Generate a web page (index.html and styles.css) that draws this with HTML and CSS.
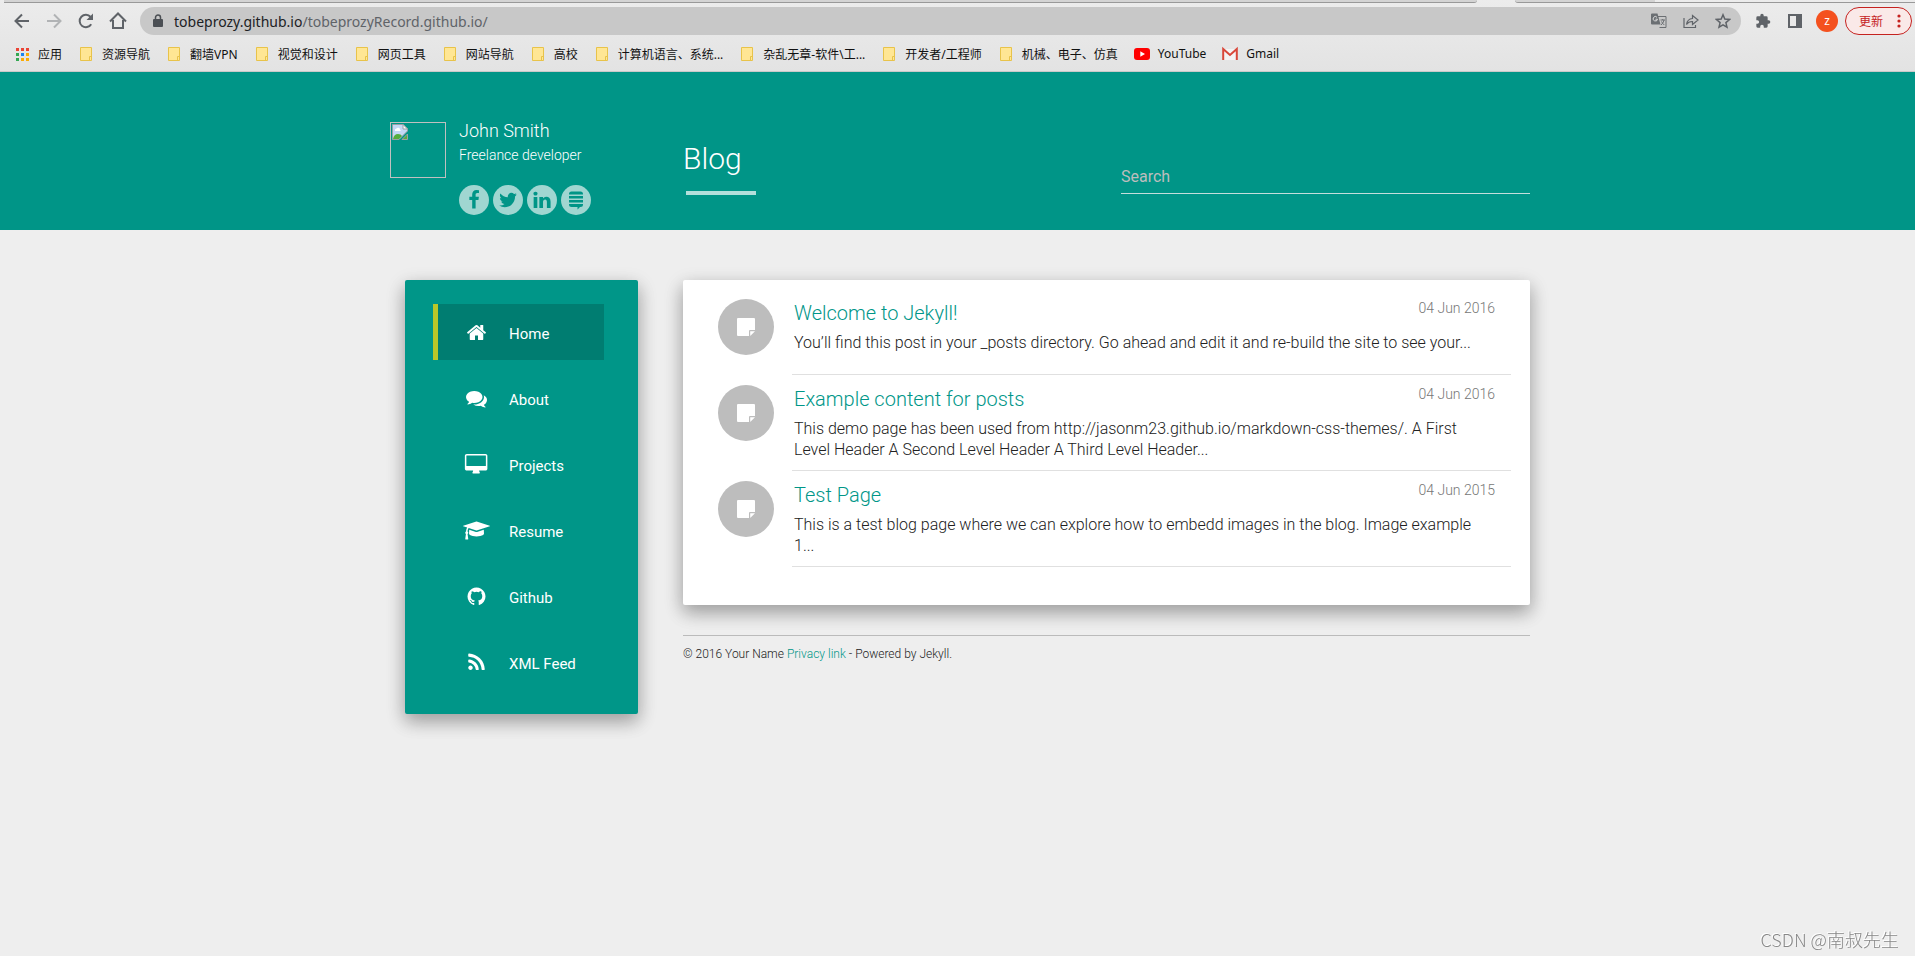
FILE: index.html
```html
<!DOCTYPE html>
<html lang="en">
<head>
    <meta charset="UTF-8">
    <meta name="viewport" content="width=device-width, initial-scale=1.0">
    <title>Blog</title>

    <link rel="stylesheet" href="styles.css">

</head>
<body>

    <svg class="sprite" aria-hidden="true">
        <symbol id="folder" viewBox="0 0 16 16">
            <path d="M2.500 1.500h11v13h-11z" fill="#ffe694" stroke="#e8c34a"/>
            <path d="M11.500 14v-3.500h2" fill="none" stroke="#e8c34a"/>
        </symbol>
        <symbol id="note" viewBox="0 0 18 18">
            <path d="M1 0h16a1 1 0 0 1 1 1v11h-5a1 1 0 0 0-1 1v5H1a1 1 0 0 1-1-1V1a1 1 0 0 1 1-1zM13.200 13.200H18L13.200 18z" fill="#fff"/>
        </symbol>
    </svg>

    <div class="browser">
        <div class="tab-strip">
            <span class="tab tab-left"></span>
            <span class="tab tab-right"></span>
            <span class="tab-rest"></span>
        </div>

        <div class="toolbar">
            <button class="tool" aria-label="Back">
                <svg width="16" height="16" viewBox="0 0 16 16"><path d="M15 8H2M8 1.500L1.500 8 8 14.500" fill="none" stroke="#5f6368" stroke-width="2"/></svg>
            </button>
            <button class="tool" aria-label="Forward">
                <svg width="16" height="16" viewBox="0 0 16 16"><path d="M1 8h13M8 1.500L14.500 8 8 14.500" fill="none" stroke="#b1b3b5" stroke-width="2"/></svg>
            </button>
            <button class="tool" aria-label="Reload">
                <svg width="16" height="16" viewBox="0 0 16 16"><path d="M13.200 11.200A6.200 6.200 0 1 1 12.600 4" fill="none" stroke="#5f6368" stroke-width="2"/><path d="M15 0.500v6.500H8.500z" fill="#5f6368"/></svg>
            </button>
            <button class="tool" aria-label="Home page">
                <svg width="18" height="18" viewBox="0 0 18 18"><path d="M1 9.500L9 1.500l8 8M4 8v8h3.500M14 8v8h-3.500M4 16h10" fill="none" stroke="#5f6368" stroke-width="2"/></svg>
            </button>

            <div class="address">
                <svg width="10" height="14" viewBox="0 0 10 14"><path d="M1 5h8a1 1 0 0 1 1 1v6a1 1 0 0 1-1 1H1a1 1 0 0 1-1-1V6a1 1 0 0 1 1-1z" fill="#4b4f54"/><path d="M2.500 6V3.500a2.500 2.500 0 0 1 5 0V6" fill="none" stroke="#4b4f54" stroke-width="1.500"/></svg>
                <span class="url">tobeprozy.github.io<span class="path">/tobeprozyRecord.github.io/</span></span>
                <button aria-label="Translate">
                    <svg width="16" height="16" viewBox="0 0 16 16"><path d="M7 3.500h8v11H8.500" fill="none" stroke="#6b6f73"/><path d="M1 0.500h5.500l3 11H1a1 1 0 0 1-1-1v-9a1 1 0 0 1 1-1z" fill="#6b6f73"/><path d="M6 4.300A2.200 2.200 0 1 0 6.500 6.200H4.500" fill="none" stroke="#ddd"/><path d="M9.500 7h4.500M11.700 6v1M13 7q-.5 3-3 5M10.500 8.500q1 2 2.800 3.500" fill="none" stroke="#6b6f73"/></svg>
                </button>
                <button aria-label="Share">
                    <svg width="16" height="16" viewBox="0 0 16 16"><path d="M1 5v9.500h11.500V12M3.500 11.500q.8-5.500 6-6V2.500L15 7l-5.500 4.500V8.500q-3.800-.2-6 3z" fill="none" stroke="#5f6368" stroke-width="1.200"/></svg>
                </button>
                <button aria-label="Bookmark this page">
                    <svg width="16" height="16" viewBox="0 0 16 16"><path d="M8 1.800l1.800 4.300 4.700.4-3.600 3.100 1.100 4.600L8 11.800l-4 2.400 1.100-4.600L1.500 6.500l4.700-.4z" fill="none" stroke="#5f6368" stroke-width="1.500"/></svg>
                </button>
            </div>

            <button class="tool" aria-label="Extensions">
                <svg width="16" height="16" viewBox="0 0 24 24"><path d="M20.500 11H19V7a2 2 0 0 0-2-2h-4V3.500a2.500 2.500 0 0 0-5 0V5H4a2 2 0 0 0-2 2v3.800h1.500a2.700 2.700 0 0 1 0 5.400H2V20a2 2 0 0 0 2 2h3.800v-1.500a2.700 2.700 0 0 1 5.400 0V22H17a2 2 0 0 0 2-2v-4h1.500a2.500 2.500 0 0 0 0-5z" fill="#5f6368"/></svg>
            </button>
            <button class="tool" aria-label="Side panel">
                <svg width="14" height="14" viewBox="0 0 14 14"><path d="M0 0h14v14H0zM2 2v10h6V2z" fill="#5f6368" fill-rule="evenodd"/></svg>
            </button>
            <button class="account">z</button>
            <button class="update">更新
                <svg width="4" height="14" viewBox="0 0 4 14"><circle cx="2" cy="2" r="1.600"/><circle cx="2" cy="7" r="1.600"/><circle cx="2" cy="12" r="1.600"/></svg>
            </button>
        </div>

        <nav class="bookmarks" aria-label="Bookmarks">
            <a href="#"><svg viewBox="0 0 16 16"><path d="M2 2h3v3H2zM7 2h3v3H7zM12 2h3v3h-3z" fill="#ea4335"/><path d="M2 7h3v3H2zM2 12h3v3H2z" fill="#34a853"/><path d="M7 7h3v3H7z" fill="#1a84f0"/><path d="M12 7h3v3h-3zM7 12h3v3H7zM12 12h3v3h-3z" fill="#fbab05"/></svg>应用</a>
            <a href="#"><svg><use href="#folder"/></svg>资源导航</a>
            <a href="#"><svg><use href="#folder"/></svg>翻墙VPN</a>
            <a href="#"><svg><use href="#folder"/></svg>视觉和设计</a>
            <a href="#"><svg><use href="#folder"/></svg>网页工具</a>
            <a href="#"><svg><use href="#folder"/></svg>网站导航</a>
            <a href="#"><svg><use href="#folder"/></svg>高校</a>
            <a href="#"><svg><use href="#folder"/></svg>计算机语言、系统...</a>
            <a href="#"><svg><use href="#folder"/></svg>杂乱无章-软件\工...</a>
            <a href="#"><svg><use href="#folder"/></svg>开发者/工程师</a>
            <a href="#"><svg><use href="#folder"/></svg>机械、电子、仿真</a>
            <a href="#"><svg viewBox="0 0 16 16"><rect y="2" width="16" height="12" rx="3" fill="#f00"/><path d="M6.300 5.300L11 8l-4.700 2.700z" fill="#fff"/></svg>YouTube</a>
            <a href="#"><svg viewBox="0 0 16 16"><path d="M2 3h12v11H2z" fill="#f4f4f4"/><path d="M1.200 14V3L8 9l6.800-6v11" fill="none" stroke="#d9483b" stroke-width="2"/></svg>Gmail</a>
        </nav>
    </div>

    <header class="header">
        <div class="container header-grid">
            <div class="profile">
                <div class="avatar" role="img" aria-label="Avatar">
                    <svg width="16" height="16" viewBox="0 0 16 16">
                        <path d="M.5.500h10.500l4.500 4.500v2L7 15.500H.5z" fill="#c5d8f5" stroke="#9aa0a6"/>
                        <path d="M11 .5V5h4.500z" fill="#fff" stroke="#9aa0a6"/>
                        <path d="M3 7a2 2 0 0 1 1.500-2.500 2 2 0 0 1 3.500 1Q9 6 8.500 7z" fill="#fff"/>
                        <path d="M1 15q1-5 5-5 3 0 4 2l-3 3z" fill="#56ad3b"/>
                        <path d="M15.500 10v5.500H10z" fill="#56ad3b" stroke="#9aa0a6"/>
                    </svg>
                </div>
                <div class="about">
                    <h2>John Smith</h2>
                    <p>Freelance developer</p>
                    <div class="social">
                        <a href="#" aria-label="Facebook"><svg viewBox="0 0 1792 1792"><path d="M1343 12v264h-157q-86 0-116 36t-30 108v189h293l-39 296h-254v759h-306v-759h-255v-296h255v-218q0-186 104-288.500t277-102.500q147 0 228 12z"/></svg></a>
                        <a href="#" aria-label="Twitter"><svg viewBox="0 0 1792 1792"><path d="M1684 408q-67 98-162 167 1 14 1 42 0 130-38 259.500t-115.500 248.500-184.500 210.500-258 146-323 54.500q-271 0-496-145 35 4 78 4 225 0 401-138-105-2-188-64.500t-114-159.500q33 5 61 5 43 0 85-11-112-23-185.500-111.500t-73.500-205.500v-4q68 38 146 41-66-44-105-115t-39-154q0-88 44-163 121 149 294.500 238.500t371.500 99.500q-8-38-8-74 0-134 94.500-228.500t228.500-94.500q140 0 236 102 109-21 205-78-37 115-142 178 93-10 186-50z"/></svg></a>
                        <a href="#" aria-label="LinkedIn"><svg viewBox="0 0 1792 1792"><path d="M477 625v991h-330v-991h330zm21-306q1 73-50.500 122t-135.500 49h-2q-82 0-132-49t-50-122q0-74 51.500-122.500t134.500-48.500 133 48.500 51 122.500zm1166 729v568h-329v-530q0-105-40.500-164.500t-126.500-59.500q-63 0-105.500 34.500t-63.500 85.500q-11 30-11 81v553h-329q2-399 2-647t-1-296l-1-48h329v144h-2q20-32 41-56t56.500-52 87-43.500 114.500-15.500q171 0 275 113.500t104 332.500z"/></svg></a>
                        <a href="#" aria-label="Stack Exchange"><svg viewBox="0 0 20 20"><path d="M3 4.500V4a2.500 2.500 0 0 1 2.500-2.500h9A2.500 2.500 0 0 1 17 4v.5zM3 6h14v2.500H3zM3 10h14v2.500H3zM3 14h14v.5a2.500 2.500 0 0 1-2.500 2.500H14l-2.500 2.500V17h-6A2.500 2.500 0 0 1 3 14.500z"/></svg></a>
                    </div>
                </div>
            </div>

            <h1 class="page-title">Blog</h1>

            <form class="search">
                <input type="text" id="search-input" aria-label="Search" placeholder="Search">
            </form>
        </div>
    </header>

    <main class="container main-grid">
        <nav class="menu" aria-label="Main">
            <a class="active" href="#"><svg viewBox="0 0 1792 1792"><path d="M1472 992v480q0 26-19 45t-45 19h-384v-384h-256v384h-384q-26 0-45-19t-19-45v-480q0-1 .5-3t.5-3l575-474 575 474q1 2 1 6zm223-69l-62 74q-8 9-21 11h-3q-13 0-21-7l-692-577-692 577q-12 8-24 7-13-2-21-11l-62-74q-8-10-7-23.500t11-21.500l719-599q32-26 76-26t76 26l244 204v-195q0-14 9-23t23-9h192q14 0 23 9t9 23v408l219 182q10 8 11 21.500t-7 23.500z"/></svg>Home</a>
            <a href="#"><svg viewBox="0 0 1792 1792"><path d="M1408 768q0 139-94 257t-256.500 186.500-353.500 68.500q-86 0-176-16-124 88-278 128-36 9-86 16h-3q-11 0-20.500-8t-11.500-21q-1-3-1-6.500t.5-6.500 2-6l2.500-5 3.500-5.500 4-5 4.500-5 4-4.500q5-6 23-25t26-29.500 22.500-29 25-38.500 20.500-44q-124-72-195-177t-71-224q0-139 94-257t256.500-186.500 353.500-68.500 353.500 68.500 256.500 186.500 94 257zm384 256q0 120-71 224.500t-195 176.500q10 24 20.500 44t25 38.500 22.500 29 26 29.500 23 25q1 1 4 4.500t4.500 5 4 5 3.500 5.500l2.500 5 2 6 .5 6.500-1 6.500q-3 14-13 22t-22 7q-50-7-86-16-154-40-278-128-90 16-176 16-271 0-472-132 58 4 88 4 161 0 309-45t264-129q125-92 192-212t67-254q0-77-23-152 129 71 204 178t75 230z"/></svg>About</a>
            <a href="#"><svg viewBox="-64 0 1984 1792"><path d="M1728 992v-832q0-13-9.500-22.500t-22.500-9.500h-1600q-13 0-22.500 9.500t-9.500 22.500v832q0 13 9.500 22.500t22.500 9.500h1600q13 0 22.500-9.500t9.500-22.500zm128-832v1088q0 66-47 113t-113 47h-544q0 37 16 77.500t32 71 16 43.500q0 26-19 45t-45 19h-512q-26 0-45-19t-19-45q0-14 16-44t32-70 16-78h-544q-66 0-113-47t-47-113v-1088q0-66 47-113t113-47h1600q66 0 113 47t47 113z"/></svg>Projects</a>
            <a href="#"><svg viewBox="0 0 2304 1792"><path d="M1774 836l18 316q4 69-82 128t-235 93.500-323 34.500-323-34.500-235-93.500-82-128l18-316 574 181q22 7 48 7t48-7zm530-324q0 23-22 31l-1120 352q-4 1-10 1t-10-1l-652-206q-43 34-71 111.500t-34 178.500q63 36 63 109 0 69-58 107l58 433q2 14-8 25-9 11-24 11h-192q-15 0-24-11-10-11-8-25l58-433q-58-38-58-107 0-73 65-111 11-207 98-330l-333-104q-22-8-22-31t22-31l1120-352q4-1 10-1t10 1l1120 352q22 8 22 31z"/></svg>Resume</a>
            <a href="#"><svg viewBox="0 0 1792 1792"><path d="M896 128q209 0 385.500 103t279.500 279.500 103 385.500q0 251-146.500 451.500t-378.500 277.500q-27 5-40-7t-13-30q0-3 .5-76.500t.5-134.500q0-97-52-142 57-6 102.500-18t94-39 81-66.500 53-105 20.500-150.500q0-119-79-206 37-91-8-204-28-9-81 11t-92 44l-38 24q-93-26-192-26t-192 26q-16-11-42.500-27t-83.500-38.500-85-13.500q-45 113-8 204-79 87-79 206 0 85 20.500 150t52.500 105 80.500 67 94 39 102.500 18q-39 36-49 103-21 10-45 15t-57 5-65.500-21.500-55.500-62.500q-19-32-48.500-52t-49.500-24l-20-3q-21 0-29 4.500t-5 11.500 9 14 13 12l7 5q22 10 43.500 38t31.500 51l10 23q13 38 44 61.500t67 30 69.500 7 55.500-3.500l23-4q0 38 .5 88.500t.5 54.500q0 18-13 30t-40 7q-232-77-378.500-277.500t-146.500-451.500q0-209 103-385.500t279.500-279.500 385.500-103z"/></svg>Github</a>
            <a href="#"><svg viewBox="0 0 1792 1792"><path d="M576 1344q0 80-56 136t-136 56-136-56-56-136 56-136 136-56 136 56 56 136zm512 123q2 28-17 48-18 21-47 21h-135q-25 0-43-16.500t-20-41.500q-22-229-184.500-391.500t-391.500-184.500q-25-2-41.500-20t-16.500-43v-135q0-29 21-47 17-17 43-17h5q160 13 306 80.500t259 181.500q114 113 181.500 259t80.500 306zm512 2q2 27-18 47-18 20-46 20h-143q-26 0-44.500-17.500t-19.500-42.500q-12-215-101-408.500t-231.500-336-336-231.500-408.500-102q-25-1-42.500-19.500t-17.500-43.500v-143q0-28 20-46 18-18 44-18h3q262 13 501.500 120t425.500 294q187 186 294 425.500t120 501.500z"/></svg>XML Feed</a>
        </nav>

        <div class="content">
            <div class="posts">
                <article class="post">
                    <div class="post-icon"><svg width="18" height="18"><use href="#note"/></svg></div>
                    <div class="post-body">
                        <div class="post-head">
                            <h4><a href="#">Welcome to Jekyll!</a></h4>
                            <span class="date">04 Jun 2016</span>
                        </div>
                        <p>You’ll find this post in your _posts directory. Go ahead and edit it and re-build the site to see your...</p>
                    </div>
                </article>
                <article class="post">
                    <div class="post-icon"><svg width="18" height="18"><use href="#note"/></svg></div>
                    <div class="post-body">
                        <div class="post-head">
                            <h4><a href="#">Example content for posts</a></h4>
                            <span class="date">04 Jun 2016</span>
                        </div>
                        <p>This demo page has been used from http://jasonm23.github.io/markdown-css-themes/. A First Level Header A Second Level Header A Third Level Header...</p>
                    </div>
                </article>
                <article class="post">
                    <div class="post-icon"><svg width="18" height="18"><use href="#note"/></svg></div>
                    <div class="post-body">
                        <div class="post-head">
                            <h4><a href="#">Test Page</a></h4>
                            <span class="date">04 Jun 2015</span>
                        </div>
                        <p>This is a test blog page where we can explore how to embedd images in the blog. Image example 1...</p>
                    </div>
                </article>
            </div>

            <footer class="footer">
                © 2016 Your Name <a href="#">Privacy link</a> - Powered by Jekyll.
            </footer>
        </div>
    </main>

    <div class="watermark">CSDN @南叔先生</div>

</body>
</html>
```

FILE: styles.css
```css
*{
    margin: 0;
    padding: 0;
    box-sizing: border-box;
}

body{
    min-height: 100vh;
    background: #eee;
    color: #212121;
    font-family: Roboto, "Noto Sans CJK SC", sans-serif;
    font-weight: 300;
}

a{
    color: #009688;
    text-decoration: none;
}

button{
    border: none;
    background: none;
    font: inherit;
}

svg{
    display: block;
    flex-shrink: 0;
}

.sprite{
    position: absolute;
    width: 0;
    height: 0;
}

/* browser bar */
.browser{
    height: 72px;
    background: linear-gradient(#ececec, #e3e3e3);
    border-bottom: 1px solid #c9c9c9;
    font-family: "Noto Sans", "Noto Sans CJK SC", sans-serif;
    font-weight: 400;
}

.tab-strip{
    display: flex;
    height: 3px;
    padding-left: 4px;
}

.tab{
    background: #d4d4d4;
    border-bottom: 1px solid #999;
}

.tab-left{
    flex: 1;
    border-bottom-right-radius: 3px;
}

.tab-right{
    width: 140px;
    margin-left: 38px;
    border-bottom-left-radius: 3px;
}

.tab-rest{
    width: 260px;
    border-bottom: 1px solid #999;
}

.toolbar{
    display: flex;
    align-items: center;
    height: 36px;
    padding: 0 3px 0 6px;
}

.tool{
    display: flex;
    align-items: center;
    justify-content: center;
    width: 32px;
    height: 28px;
}

.address{
    display: flex;
    flex: 1;
    align-items: center;
    gap: 16px;
    height: 28px;
    margin: 0 6px;
    padding: 0 10px 0 13px;
    background: #c8c8c8;
    border-radius: 14px;
}

.url{
    flex: 1;
    margin-left: -5px;
    color: #202124;
    font-size: 14px;
}

.path{
    color: #5f6368;
}

.account{
    width: 22px;
    height: 22px;
    margin: 0 7px 0 5px;
    border-radius: 50%;
    background: #f4511e;
    color: #fff;
    font-size: 12px;
    line-height: 20px;
}

.update{
    display: flex;
    align-items: center;
    gap: 14px;
    height: 28px;
    padding: 0 10px 0 13px;
    border: 1px solid #c5221f;
    border-radius: 14px;
    background: #fae9e8;
    color: #c5221f;
    fill: #c5221f;
    font-size: 12px;
}

.bookmarks{
    display: flex;
    align-items: center;
    gap: 16px;
    height: 29px;
    padding-left: 14px;
}

.bookmarks a{
    display: flex;
    align-items: center;
    gap: 8px;
    color: #111;
    font-size: 12px;
    white-space: nowrap;
}

.bookmarks svg{
    width: 16px;
    height: 16px;
}

/* header */
.container{
    display: grid;
    column-gap: 30px;
    max-width: 1145px;
    margin: 0 auto;
    padding-left: 5px;
}

.header{
    padding: 50px 0 15px;
    background: #009587;
    color: #fff;
}

.header-grid{
    grid-template-columns: 263px 1fr 409px;
    align-items: start;
}

.profile{
    display: flex;
    gap: 13px;
}

.avatar{
    width: 56px;
    height: 56px;
    padding: 1px;
    border: 1px solid #c0c0c0;
}

.about h2{
    font-size: 18px;
    font-weight: 300;
    line-height: 18px;
}

.about p{
    margin: 5px 0 20px;
    font-size: 14px;
    line-height: 20px;
}

.social{
    display: flex;
    gap: 4px;
}

.social a{
    display: flex;
    align-items: center;
    justify-content: center;
    width: 30px;
    height: 30px;
    border-radius: 50%;
    background: #a0d6d1;
}

.social svg{
    width: 20px;
    height: 20px;
    fill: #009587;
}

.page-title{
    margin-top: 20px;
    font-size: 30px;
    font-weight: 300;
    line-height: 33px;
}

.page-title::after{
    content: "";
    display: block;
    width: 70px;
    height: 4px;
    margin: 16px 0 0 3px;
    background: #b3dfdb;
}

.search{
    margin-top: 37px;
}

.search input{
    width: 100%;
    height: 35px;
    border: none;
    border-bottom: 1px solid #c5dedc;
    background: none;
    color: #fff;
    font: 400 16px Roboto, sans-serif;
}

.search input::placeholder{
    color: #bdbdbd;
}

/* side menu and posts */
.main-grid{
    grid-template-columns: 263px 1fr;
    align-items: start;
    padding-top: 50px;
}

.menu,
.posts{
    border-radius: 2px;
    box-shadow: 0 8px 17px rgba(0, 0, 0, 0.2), 0 6px 20px rgba(0, 0, 0, 0.19);
}

.menu{
    display: flex;
    flex-direction: column;
    gap: 10px;
    margin: 0 15px;
    padding: 24px 34px 24px 28px;
    background: #009688;
}

.menu a{
    display: flex;
    align-items: center;
    gap: 18px;
    height: 56px;
    padding: 3px 0 0 24px;
    border-left: 5px solid transparent;
    background-clip: padding-box;
    color: #fff;
    font-size: 15px;
    font-weight: 400;
}

.menu .active{
    border-left-color: #b9c729;
    background-color: #007d71;
}

.menu svg{
    width: 29px;
    height: 21px;
    margin-bottom: 3px;
    fill: #fff;
}

.posts{
    display: flex;
    flex-direction: column;
    gap: 10px;
    padding: 19px 19px 38px 35px;
    background: #fff;
}

.post{
    display: flex;
    gap: 18px;
}

.post-icon{
    display: flex;
    align-items: center;
    justify-content: center;
    flex-shrink: 0;
    width: 56px;
    height: 56px;
    border-radius: 50%;
    background: #bdbdbd;
}

.post-body{
    flex: 1;
    min-height: 76px;
    padding: 0 16px 10px 2px;
    border-bottom: 1px solid #e0e0e0;
}

.post-head{
    display: flex;
    justify-content: space-between;
    align-items: flex-start;
}

.post h4{
    margin: 3px 0 8px;
    font-size: 20px;
    font-weight: 300;
    line-height: 22px;
}

.date{
    color: #777;
    font-size: 14px;
    line-height: 18px;
}

.post p{
    padding-right: 16px;
    font-size: 16px;
    line-height: 21px;
}

.footer{
    margin-top: 30px;
    padding-top: 10px;
    border-top: 1px solid #bbb;
    font-size: 12px;
    line-height: 17px;
}

.watermark{
    position: fixed;
    right: 16px;
    bottom: 4px;
    color: #888;
    font: 300 18px "Noto Sans CJK SC", sans-serif;
    text-shadow: -1px -1px #fff;
}
```
